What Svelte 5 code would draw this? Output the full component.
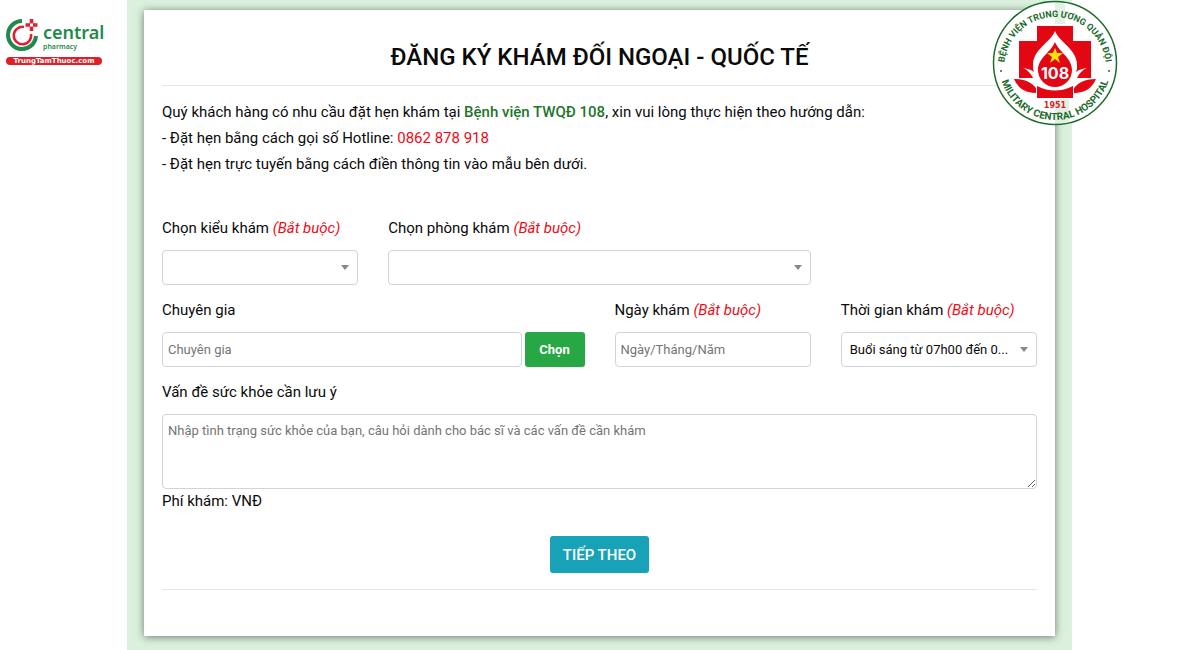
<script>
  let examType = $state('');
  let clinic = $state('');
  let expert = $state('');
  let examDate = $state('');
  let timeSlot = $state('morning');
  let note = $state('');

  function handleSubmit(event) {
    event.preventDefault();
  }
</script>

{#snippet required()}
  <em class="required">(Bắt buộc)</em>
{/snippet}

<div class="page">
  <aside class="brand">
    <div class="brand-row">
      <svg class="brand-mark" viewBox="0 0 34 34" aria-hidden="true">
        <path d="M16 3A14 14 0 1 0 30 18" fill="none" stroke="#1f8a4c" stroke-width="4" />
        <path d="M18 9A8.700 8.700 0 1 0 25 16" fill="none" stroke="#e11f35" stroke-width="2.500" />
        <path d="M25.500 1v4.500M25.500 8.500V13M19.500 7H24M27 7h4.500" stroke="#e11f35" stroke-width="3.600" />
      </svg>
      <div class="brand-name">
        <span class="brand-title">central</span>
        <span class="brand-sub">pharmacy</span>
      </div>
    </div>
    <span class="brand-site">TrungTamThuoc.com</span>
  </aside>

  <main class="content">
    <section class="card">
      <svg class="seal" viewBox="0 0 126 126" role="img" aria-label="Bệnh viện Trung ương Quân đội 108">
        <defs>
          <path id="seal-top" d="M12 68A51 51 0 1 1 114 68" />
          <path id="seal-bottom" d="M7 64A56 56 0 0 0 119 64" />
        </defs>
        <circle cx="63" cy="63" r="61.500" fill="#fff" />
        <path d="M63 2h10v22H63zM63 99h14v23l-14 2z" fill="#e3f1e4" />
        <circle cx="63" cy="63" r="61.500" fill="none" stroke="#1c6b2c" stroke-width="1.500" />
        <!-- red cross -->
        <path d="M45 26h36v15h18v37H27V41h18z" fill="#e30613" />
        <!-- lotus petals around the drop -->
        <path
          d="M63 31C58 43 41 49 41 65c0 3 0 5 1 7-4-3-8-4-15-4v11l18 11h36l18-11V68c-7 0-11 1-15 4 1-2 1-4 1-7 0-16-17-22-22-34z"
          fill="#fff"
        />
        <path d="M27 41h18v10c-5 5-7 10-7 17-3-2-7-3-11-3zM99 41H81v10c5 5 7 10 7 17 3-2 7-3 11-3z" fill="#e30613" />
        <path d="M27 67c7 1 11 5 14 11H27zM99 67c-7 1-11 5-14 11h14z" fill="#e30613" />
        <path d="M22 79c10 0 17 3 22 9v5c-11 0-18-5-22-14zM104 79c-10 0-17 3-22 9v5c11 0 18-5 22-14z" fill="#e30613" />
        <path d="M45 86c12 6 24 6 36 0v12H45z" fill="#e30613" />
        <path d="M63 42c-4 10-17 16-17 28a17 17 0 0 0 34 0c0-12-13-18-17-28z" fill="#e30613" />
        <path d="M63 48l2 5h6l-5 4 2 6-5-4-5 4 2-6-5-4h6z" fill="#ffe600" />
        <text class="seal-number" x="63" y="79" text-anchor="middle">108</text>
        <text class="seal-year" x="63" y="108" text-anchor="middle">1951</text>
        <text class="seal-text">
          <textPath href="#seal-top" startOffset="50%" text-anchor="middle">BỆNH VIỆN TRUNG ƯƠNG QUÂN ĐỘI</textPath>
        </text>
        <text class="seal-text seal-text-bottom">
          <textPath href="#seal-bottom" startOffset="50%" text-anchor="middle">MILITARY CENTRAL HOSPITAL</textPath>
        </text>
        <circle cx="9" cy="71" r="1" fill="#1c6b2c" />
        <circle cx="117" cy="71" r="1" fill="#1c6b2c" />
      </svg>

      <h1>ĐĂNG KÝ KHÁM ĐỐI NGOẠI - QUỐC TẾ</h1>
      <hr />

      <div class="intro">
        <p>
          Quý khách hàng có nhu cầu đặt hẹn khám tại <strong>Bệnh viện TWQĐ 108</strong>, xin vui lòng
          thực hiện theo hướng dẫn:
        </p>
        <p>- Đặt hẹn bằng cách gọi số Hotline: <span class="hotline">0862 878 918</span></p>
        <p>- Đặt hẹn trực tuyến bằng cách điền thông tin vào mẫu bên dưới.</p>
      </div>

      <form onsubmit={handleSubmit}>
        <div class="fields">
          <div class="field">
            <label for="exam-type">Chọn kiểu khám {@render required()}</label>
            <div class="select">
              <select id="exam-type" bind:value={examType}>
                <option value=""></option>
              </select>
            </div>
          </div>

          <div class="field wide">
            <label for="clinic">Chọn phòng khám {@render required()}</label>
            <div class="select">
              <select id="clinic" bind:value={clinic}>
                <option value=""></option>
              </select>
            </div>
          </div>

          <div class="field wide new-row">
            <label for="expert">Chuyên gia</label>
            <div class="picker">
              <input id="expert" type="text" placeholder="Chuyên gia" bind:value={expert} />
              <button class="btn-pick" type="button">Chọn</button>
            </div>
          </div>

          <div class="field">
            <label for="exam-date">Ngày khám {@render required()}</label>
            <input id="exam-date" type="text" placeholder="Ngày/Tháng/Năm" bind:value={examDate} />
          </div>

          <div class="field">
            <label for="time-slot">Thời gian khám {@render required()}</label>
            <div class="select">
              <select id="time-slot" bind:value={timeSlot}>
                <option value="morning">Buổi sáng từ 07h00 đến 0...</option>
              </select>
            </div>
          </div>

          <div class="field full">
            <label for="note">Vấn đề sức khỏe cần lưu ý</label>
            <textarea
              id="note"
              placeholder="Nhập tình trạng sức khỏe của bạn, câu hỏi dành cho bác sĩ và các vấn đề cần khám"
              bind:value={note}
            ></textarea>
          </div>
        </div>

        <p class="fee">Phí khám: VNĐ</p>

        <div class="actions">
          <button class="btn-next" type="submit">TIẾP THEO</button>
        </div>
      </form>
      <hr />
    </section>
  </main>
</div>

<style>
  :global(body) {
    margin: 0;
    background: #fff;
  }

  .page {
    display: grid;
    grid-template-columns: 127px minmax(0, 1fr) 128px;
    color: #0a0a0a;
    font-family: Roboto, 'Liberation Sans', sans-serif;
    font-size: 15px;
    line-height: 24px;
  }

  .page *,
  .page *::before,
  .page *::after {
    box-sizing: border-box;
  }

  /* Pharmacy logo */
  .brand {
    display: flex;
    flex-direction: column;
    align-items: flex-start;
    padding: 18px 0 0 6px;
  }

  .brand-row {
    display: flex;
    align-items: flex-end;
    gap: 3px;
  }

  .brand-mark {
    width: 34px;
    height: 34px;
  }

  .brand-name {
    display: flex;
    flex-direction: column;
    color: #1f8a4c;
    font-family: 'Noto Sans', sans-serif;
  }

  .brand-title {
    font-size: 18px;
    font-weight: 600;
    line-height: 20px;
  }

  .brand-sub {
    font-size: 7px;
    font-weight: 600;
    line-height: 10px;
  }

  .brand-site {
    width: 96px;
    margin-top: 5px;
    border-radius: 4px;
    background: #e11f26;
    color: #fff;
    font-family: 'DejaVu Sans', sans-serif;
    font-size: 7px;
    font-weight: 700;
    line-height: 8px;
    text-align: center;
  }

  /* Card */
  .content {
    padding: 10px 17px 14px;
    background: #dcf1dd;
  }

  .card {
    position: relative;
    min-height: 626px;
    padding: 32px 18px 30px;
    background: #fff;
    box-shadow: 0 1px 8px rgba(0, 0, 0, 0.5);
  }

  h1 {
    margin: 0;
    font-size: 24px;
    font-weight: 500;
    line-height: 30px;
    text-align: center;
  }

  hr {
    height: 1px;
    margin: 13px 0;
    border: 0;
    background: #e5e5e5;
  }

  p {
    margin: 0;
  }

  .intro {
    margin-bottom: 39px;
    line-height: 26px;
  }

  .intro strong {
    color: #23752a;
    font-weight: 500;
  }

  .hotline,
  .required {
    color: #f00a14;
  }

  /* Form */
  .fields {
    display: grid;
    grid-template-columns: repeat(4, minmax(0, 1fr));
    gap: 13px 30px;
  }

  .wide {
    grid-column: span 2;
  }

  .new-row {
    grid-column: 1 / span 2;
  }

  .full {
    grid-column: 1 / -1;
  }

  .field {
    display: flex;
    flex-direction: column;
    gap: 10px;
  }

  input,
  select,
  textarea {
    display: block;
    width: 100%;
    margin: 0;
    border: 1px solid #ced4da;
    border-radius: 4px;
    background: #fff;
    color: #0a0a0a;
    font: inherit;
    font-size: 13px;
  }

  input,
  select {
    height: 35px;
  }

  input {
    padding: 0 5px;
  }

  textarea {
    height: 75px;
    padding: 6px 5px;
    line-height: 20px;
    resize: both;
  }

  input::placeholder,
  textarea::placeholder {
    color: #757575;
    opacity: 1;
  }

  .select {
    position: relative;
  }

  .select::after {
    content: '';
    position: absolute;
    top: 15px;
    right: 9px;
    border: 4px solid transparent;
    border-top: 5px solid #888;
    border-bottom: 0;
    pointer-events: none;
  }

  select {
    padding: 0 24px 0 8px;
    appearance: none;
    text-overflow: ellipsis;
  }

  .picker {
    display: flex;
    gap: 3px;
  }

  .picker input {
    flex: 1;
    min-width: 0;
  }

  button {
    border: 0;
    border-radius: 3px;
    color: #fff;
    font: inherit;
    cursor: pointer;
  }

  .btn-pick {
    width: 60px;
    background: #28a745;
    font-size: 13px;
    font-weight: 700;
  }

  .actions {
    display: flex;
    justify-content: center;
    margin: 23px 0 16px;
  }

  .btn-next {
    height: 37px;
    padding: 0 13px;
    background: #17a2b8;
    font-weight: 500;
  }

  /* Hospital seal */
  .seal {
    position: absolute;
    top: -10px;
    right: -63px;
    width: 126px;
    height: 126px;
  }

  .seal text {
    font-weight: 700;
  }

  .seal-text {
    fill: #1c6b2c;
    font-size: 9px;
  }

  .seal-text-bottom {
    font-size: 10px;
  }

  .seal-number {
    fill: #fff;
    font-family: Inter, sans-serif;
    font-size: 16px;
  }

  .seal-year {
    fill: #d8232a;
    font-family: 'DejaVu Sans', sans-serif;
    font-size: 8px;
  }

  @media (max-width: 900px) {
    .page {
      grid-template-columns: minmax(0, 1fr);
    }

    .brand {
      padding-bottom: 12px;
    }

    .seal {
      display: none;
    }

    .fields {
      grid-template-columns: minmax(0, 1fr);
    }

    .wide,
    .new-row {
      grid-column: auto;
    }
  }
</style>
